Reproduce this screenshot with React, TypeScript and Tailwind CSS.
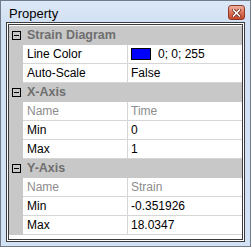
import React from 'react'

type Row =
  | { kind: 'cat'; label: string }
  | { kind: 'prop'; name: string; value: string; readOnly?: boolean; color?: string }

const ROWS: Row[] = [
  { kind: 'cat', label: 'Strain Diagram' },
  { kind: 'prop', name: 'Line Color', value: '0; 0; 255', color: '#0000ff' },
  { kind: 'prop', name: 'Auto-Scale', value: 'False' },
  { kind: 'cat', label: 'X-Axis' },
  { kind: 'prop', name: 'Name', value: 'Time', readOnly: true },
  { kind: 'prop', name: 'Min', value: '0' },
  { kind: 'prop', name: 'Max', value: '1' },
  { kind: 'cat', label: 'Y-Axis' },
  { kind: 'prop', name: 'Name', value: 'Strain', readOnly: true },
  { kind: 'prop', name: 'Min', value: '-0.351926' },
  { kind: 'prop', name: 'Max', value: '18.0347' },
]

function MinusBox() {
  return (
    <div className="w-[9px] h-[9px] border border-black bg-[#c8c8c8] flex items-center justify-center">
      <div className="w-[5px] h-[1px] bg-black" />
    </div>
  )
}

function CloseButton() {
  return (
    <div className="w-[17px] h-[15px] rounded-[3px] border border-[#8e3a28] bg-gradient-to-b from-[#efb4a1] via-[#dc7259] to-[#c4452c] flex items-center justify-center">
      <svg width="9" height="8" viewBox="0 0 9 8">
        <path d="M1.5 1 L7.5 7 M7.5 1 L1.5 7" stroke="#5a1e12" strokeWidth="3" strokeLinecap="square" />
        <path d="M1.5 1 L7.5 7 M7.5 1 L1.5 7" stroke="#ffffff" strokeWidth="1.6" strokeLinecap="square" />
      </svg>
    </div>
  )
}

export default function App() {
  return (
    <div
      className="w-[251px] h-[247px] border border-[#707c8a] bg-[#d2e1f3] flex flex-col text-[12px] leading-none"
      style={{ fontFamily: '"Liberation Sans", Arial, sans-serif' }}
    >
      {/* Title bar */}
      <div className="h-[21px] flex items-start justify-between pl-[8px] pr-[5px] bg-gradient-to-b from-[#dbe8f7] to-[#d2e1f3]">
        <span className="mt-[6px] text-[13px] text-black">Property</span>
        <div className="mt-[4px]">
          <CloseButton />
        </div>
      </div>

      {/* Grid panel */}
      <div className="mx-[5px] h-[220px] border border-[#3c3c3c] bg-white p-[1px]">
        <div className="h-full border border-[#3c3c3c] bg-white pt-[1px]">
          {ROWS.map((row, i) =>
            row.kind === 'cat' ? (
              <div key={i} className="h-[19px] bg-[#c8c8c8] flex items-center">
                <div className="w-[14px] pl-[3px]">
                  <MinusBox />
                </div>
                <span className="pl-[4px] font-bold text-[12.5px] text-[#6f6f6f]">{row.label}</span>
              </div>
            ) : (
              <div key={i} className="h-[19px] flex">
                <div className="w-[14px] bg-[#c8c8c8]" />
                <div
                  className={`w-[104px] border-b border-[#d6d6d6] flex items-center pl-[4px] ${
                    row.readOnly ? 'text-[#8c8c8c]' : 'text-black'
                  }`}
                >
                  {row.name}
                </div>
                <div
                  className={`flex-1 border-b border-l border-[#d6d6d6] flex items-center pl-[3px] ${
                    row.readOnly ? 'text-[#8c8c8c]' : 'text-black'
                  }`}
                >
                  {row.color && (
                    <span className="w-[20px] h-[12px] border border-black mr-[7px]" style={{ backgroundColor: row.color }} />
                  )}
                  {row.value}
                </div>
              </div>
            )
          )}
        </div>
      </div>
    </div>
  )
}
